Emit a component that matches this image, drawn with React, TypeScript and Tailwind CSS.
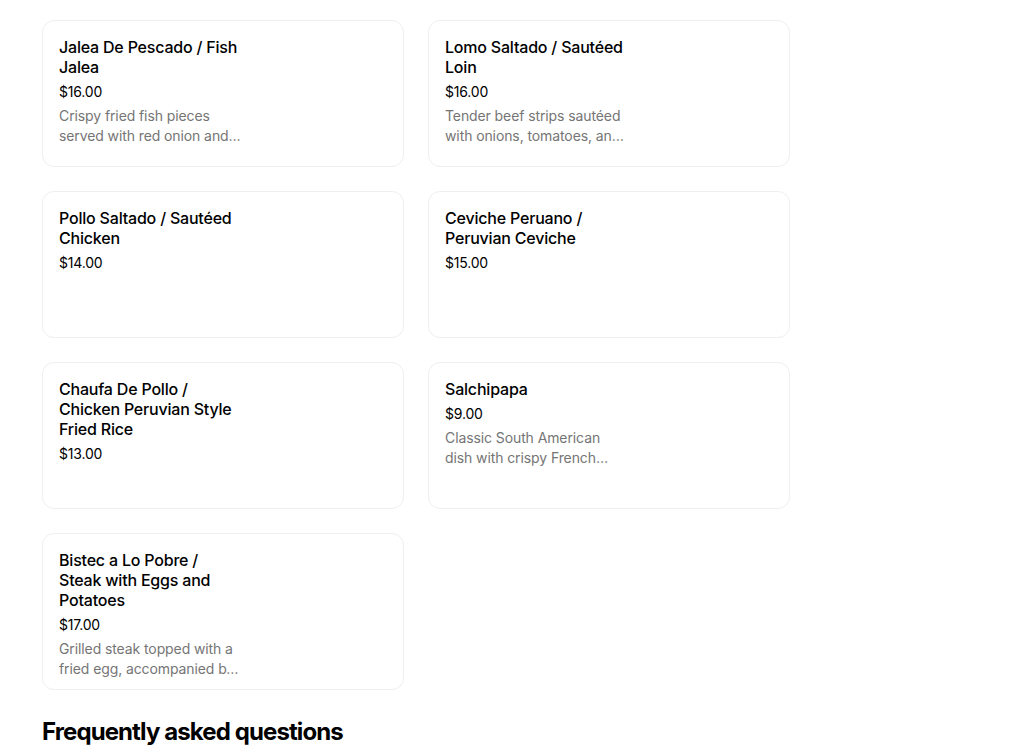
const items = [
  {
    name: "Jalea De Pescado / Fish Jalea",
    price: "$16.00",
    desc: "Crispy fried fish pieces served with red onion and salsa criolla, yuca and lime.",
  },
  {
    name: "Lomo Saltado / Sautéed Loin",
    price: "$16.00",
    desc: "Tender beef strips sautéed with onions, tomatoes, and french fries, served with rice.",
  },
  { name: "Pollo Saltado / Sautéed Chicken", price: "$14.00" },
  { name: "Ceviche Peruano / Peruvian Ceviche", price: "$15.00" },
  { name: "Chaufa De Pollo / Chicken Peruvian Style Fried Rice", price: "$13.00" },
  {
    name: "Salchipapa",
    price: "$9.00",
    desc: "Classic South American dish with crispy French fries and sliced sausages.",
  },
  {
    name: "Bistec a Lo Pobre / Steak with Eggs and Potatoes",
    price: "$17.00",
    desc: "Grilled steak topped with a fried egg, accompanied by rice, fries and fried plantain.",
  },
];

function MenuCard({ name, price, desc }: { name: string; price: string; desc?: string }) {
  return (
    <div className="min-h-[147px] rounded-xl border border-[#efefef] bg-white px-4 pt-4 pb-[10px]">
      <div className="w-[183px]">
        <h3 className="text-[16px] leading-5 font-medium tracking-[-0.2px] text-black">{name}</h3>
        <p className="mt-[6px] text-[14px] leading-[18px] tracking-[-0.2px] text-black">{price}</p>
        {desc && (
          <p className="mt-[5px] text-[14px] leading-5 tracking-[-0.1px] text-[#757575] line-clamp-2">
            {desc}
          </p>
        )}
      </div>
    </div>
  );
}

export default function App() {
  return (
    <div
      className="min-h-screen bg-white"
      style={{ fontFamily: "Inter, 'Noto Sans', sans-serif" }}
    >
      <div className="px-[42px] pt-5">
        <div className="grid w-[748px] grid-cols-2 gap-x-6 gap-y-6">
          {items.map((it) => (
            <MenuCard key={it.name} {...it} />
          ))}
        </div>
        <h2 className="mt-[26px] text-[24px] leading-8 font-bold tracking-[-0.9px] text-black">
          Frequently asked questions
        </h2>
      </div>
    </div>
  );
}
